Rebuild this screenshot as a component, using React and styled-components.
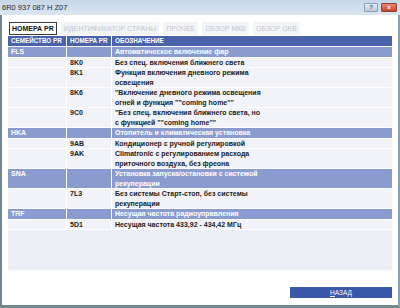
import React from 'react';
import styled, { createGlobalStyle } from 'styled-components';

const GlobalStyle = createGlobalStyle`
  html, body {
    margin: 0;
    padding: 0;
    background: #ffffff;
  }
  body {
    font-family: "Liberation Sans", Arial, sans-serif;
  }
`;

const Window = styled.div`
  width: 400px;
  height: 308px;
  display: flex;
  flex-direction: column;
  box-sizing: border-box;
  overflow: hidden;
`;

const TitleBar = styled.div`
  height: 15px;
  flex: none;
  display: flex;
  align-items: center;
  justify-content: space-between;
  padding: 0 3px 0 2px;
  background: linear-gradient(#c6d7e9, #dbe6f1);
  font-size: 7.5px;
  color: #1c2430;
`;

const TitleButtons = styled.div`
  display: flex;
  gap: 3px;
  align-items: center;
`;

const TitleButton = styled.div`
  width: ${(p) => (p.$close ? '14px' : '12px')};
  height: 7px;
  border-radius: 1px;
  background: ${(p) => (p.$close ? 'linear-gradient(#e78a74, #c8442e)' : 'linear-gradient(#e4ecf4, #bccbdc)')};
  border: 1px solid ${(p) => (p.$close ? '#9c3a2a' : '#8a9cb0')};
  color: ${(p) => (p.$close ? '#fff' : '#4a5a70')};
  font-size: 6px;
  font-weight: bold;
  line-height: 7px;
  text-align: center;
`;

const Body = styled.div`
  flex: 1;
  min-height: 0;
  display: flex;
  flex-direction: column;
  border-left: 2px solid #6f8790;
  border-right: 2px solid #8aa0ac;
  border-bottom: 3px solid #6f8790;
  padding: 7px 6px 0 6px;
  background: #ffffff;
`;

const Tabs = styled.div`
  display: flex;
  gap: 4px;
  height: 13px;
  flex: none;
  align-items: stretch;
  margin-left: 1px;
`;

const Tab = styled.div`
  display: flex;
  align-items: center;
  padding: 0 2px;
  font-size: 7px;
  font-weight: ${(p) => (p.$active ? 'bold' : 'normal')};
  color: ${(p) => (p.$active ? '#111' : '#c2c7cf')};
  background: ${(p) => (p.$active ? '#ffffff' : '#f3f4f7')};
  border: 1px solid ${(p) => (p.$active ? '#3a3a3a' : 'transparent')};
  white-space: nowrap;
`;

const Grid = styled.div`
  display: grid;
  grid-template-columns: 58px 44px 1fr;
  column-gap: 1px;
  row-gap: 1px;
  margin-top: 1px;
  background: #ffffff;
  font-size: 7px;
  font-weight: bold;
`;

const Cell = styled.div`
  padding: 0 3px;
  font-size: ${(p) => (p.$kind === 'head' ? '6.3px' : 'inherit')};
  background: ${(p) => (p.$kind === 'head' ? '#4863a9' : p.$kind === 'group' ? '#8a9bcf' : '#f2f3f8')};
  color: ${(p) => (p.$kind === 'data' ? '#1b1b1b' : '#ffffff')};
  line-height: ${(p) => (p.$kind === 'head' ? '10px' : '9.5px')};
  white-space: ${(p) => (p.$kind === 'head' ? 'nowrap' : 'pre-line')};
  overflow: hidden;
`;

const Row = styled.div`
  display: contents;
`;

const Empty = styled.div`
  grid-column: 1 / 4;
  height: 40px;
  background: #eceef6;
`;

const Footer = styled.div`
  display: flex;
  justify-content: flex-end;
  margin-top: 17px;
`;

const BackButton = styled.button`
  width: 102px;
  height: 11px;
  padding: 0;
  border: none;
  background: #3a58a8;
  color: #ffffff;
  font-family: "Liberation Sans", Arial, sans-serif;
  font-size: 6.5px;
  line-height: 11px;
  u {
    text-decoration: underline;
  }
`;

const rows = [
  { type: 'group', fam: 'FLS', text: 'Автоматическое включение фар' },
  { type: 'data', code: '8K0', text: 'Без спец. включения ближнего света' },
  { type: 'data', code: '8K1', text: 'Функция включения дневного режима\nосвещения' },
  { type: 'data', code: '8K6', text: '"Включение дневного режима освещения\nогней и функция ""coming home""' },
  { type: 'data', code: '9C0', text: '"Без спец. включения ближнего света, но\nс функцией ""coming home""' },
  { type: 'group', fam: 'HKA', text: 'Отопитель и климатическая установка' },
  { type: 'data', code: '9AB', text: 'Кондиционер с ручной регулировкой' },
  { type: 'data', code: '9AK', text: 'Climatronic с регулированием расхода\nприточного воздуха, без фреона' },
  { type: 'group', fam: 'SNA', text: 'Установка запуска/остановки с системой\nрекуперации' },
  { type: 'data', code: '7L3', text: 'Без системы Старт-стоп, без системы\nрекуперации' },
  { type: 'group', fam: 'TRF', text: 'Несущая частота радиоуправления' },
  { type: 'data', code: '5D1', text: 'Несущая частота 433,92 - 434,42 МГц' },
];

const tabs = ['НОМЕРА PR', 'ИДЕНТИФИКАТОР СТРАНЫ', 'ПРОЧЕЕ', 'ОБЗОР МКВ', 'ОБЗОР GKB'];

export default function App() {
  return (
    <>
      <GlobalStyle />
      <Window>
        <TitleBar>
          <span>6R0 937 087 H  Z07</span>
          <TitleButtons>
            <TitleButton>?</TitleButton>
            <TitleButton $close>x</TitleButton>
          </TitleButtons>
        </TitleBar>
        <Body>
          <Tabs>
            {tabs.map((t, i) => (
              <Tab key={t} $active={i === 0}>{t}</Tab>
            ))}
          </Tabs>
          <Grid>
            <Row>
              <Cell $kind="head">СЕМЕЙСТВО PR</Cell>
              <Cell $kind="head">НОМЕРА PR</Cell>
              <Cell $kind="head">ОБОЗНАЧЕНИЕ</Cell>
            </Row>
            {rows.map((r, i) =>
              r.type === 'group' ? (
                <Row key={i}>
                  <Cell $kind="group">{r.fam}</Cell>
                  <Cell $kind="group" />
                  <Cell $kind="group">{r.text}</Cell>
                </Row>
              ) : (
                <Row key={i}>
                  <Cell $kind="data" />
                  <Cell $kind="data">{r.code}</Cell>
                  <Cell $kind="data">{r.text}</Cell>
                </Row>
              )
            )}
            <Empty />
          </Grid>
          <Footer>
            <BackButton>
              <u>Н</u>АЗАД
            </BackButton>
          </Footer>
        </Body>
      </Window>
    </>
  );
}
